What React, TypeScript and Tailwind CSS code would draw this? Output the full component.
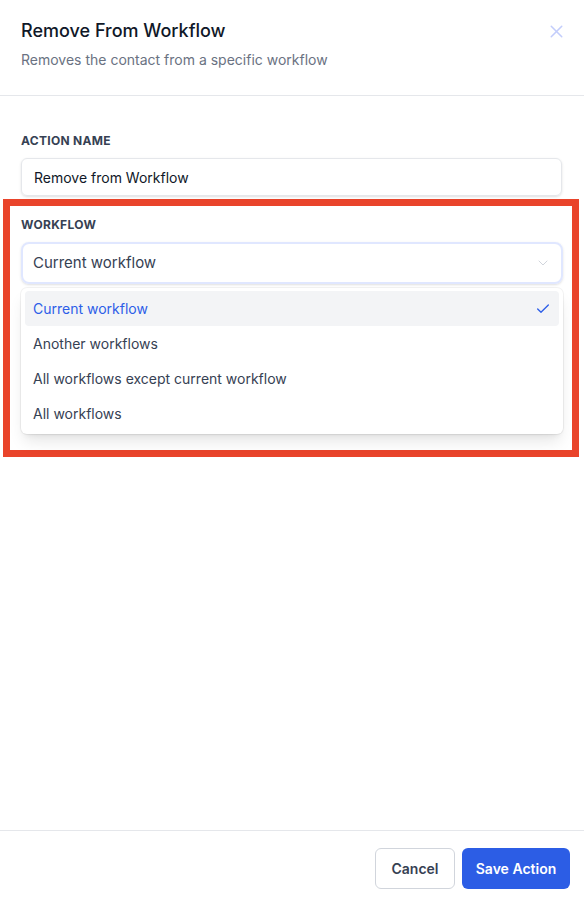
import { Check, ChevronDown, X } from "lucide-react";

const options = [
  "Current workflow",
  "Another workflows",
  "All workflows except current workflow",
  "All workflows",
];

export default function App() {
  return (
    <main className="flex h-[902px] flex-col bg-white font-['Inter',sans-serif]">
      <header className="flex items-start justify-between border-b border-gray-200 px-[21px] pb-[25px] pt-[17px]">
        <div className="flex flex-col gap-[5px]">
          <h1 className="text-[18px] font-medium leading-7 text-gray-900">Remove From Workflow</h1>
          <p className="text-sm leading-5 text-gray-500">Removes the contact from a specific workflow</p>
        </div>
        <button className="-mr-[4px] mt-[4px] text-[#c3cdfb]">
          <X className="h-[21px] w-[21px]" strokeWidth={1.75} />
        </button>
      </header>

      <section className="flex-1 pt-[37px]">
        <div className="pl-[21px] pr-[22px]">
          <label className="block text-xs font-bold uppercase leading-4 tracking-wide text-gray-700">
            Action Name
          </label>
          <input
            readOnly
            value="Remove from Workflow"
            className="mt-[9px] h-[38px] w-full rounded-md border border-gray-200 px-3 text-sm text-gray-900 shadow-sm outline-none"
          />
        </div>

        <div className="ml-[3px] mr-[5px] mt-[3px] border-[7px] border-[#e9442b] pb-[13px] pl-[11px] pr-[9px] pt-[11px]">
          <label className="block text-xs font-bold uppercase leading-4 tracking-wide text-gray-700">
            Workflow
          </label>
          <div className="mt-[9px] flex h-[42px] items-center justify-between rounded-lg border-2 border-indigo-100 px-[10px] shadow-sm">
            <span className="text-[15px] text-gray-700">Current workflow</span>
            <ChevronDown className="h-4 w-4 text-gray-300" strokeWidth={1.5} />
          </div>
          <ul className="mb-[3px] mt-1 rounded-md bg-white px-1 py-[3px] shadow-lg ring-1 ring-black/5">
            {options.map((o, i) => (
              <li
                key={o}
                className={
                  i === 0
                    ? "flex h-[35px] items-center justify-between rounded bg-gray-100 px-2 text-sm text-[#2d5ee8]"
                    : "flex h-[35px] items-center pl-2 text-sm text-gray-700"
                }
              >
                {o}
                {i === 0 && <Check className="h-4 w-4 text-[#2d5ee8]" strokeWidth={2} />}
              </li>
            ))}
          </ul>
        </div>
      </section>

      <footer className="flex justify-end gap-[7px] border-t border-gray-200 pb-[13px] pl-4 pr-[14px] pt-[17px]">
        <button className="h-[41px] w-[80px] rounded-md border border-gray-300 bg-white text-sm font-semibold text-gray-700">
          Cancel
        </button>
        <button className="h-[41px] w-[108px] rounded-md bg-[#2c5de5] text-sm font-semibold text-white">
          Save Action
        </button>
      </footer>
    </main>
  );
}
